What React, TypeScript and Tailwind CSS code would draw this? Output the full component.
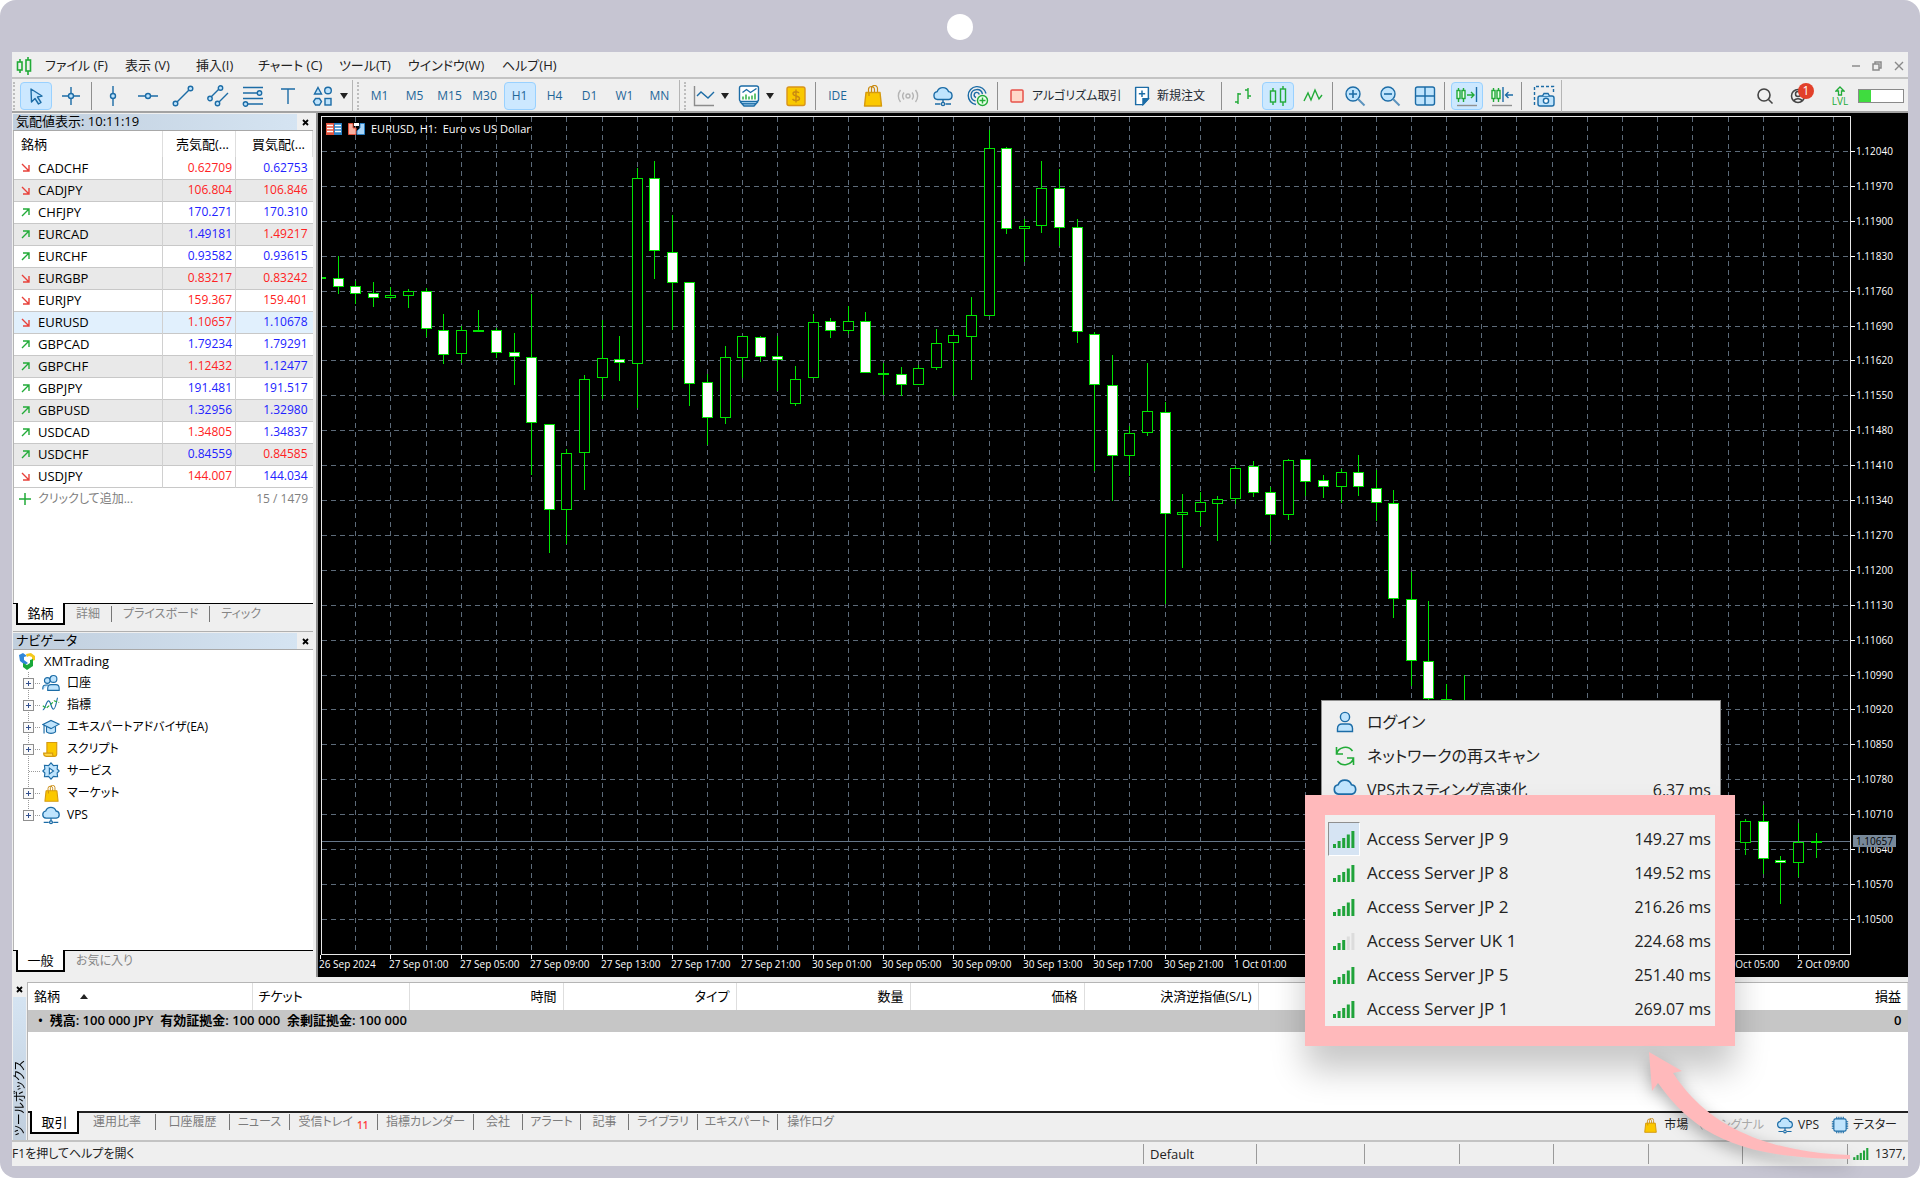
import type { ReactNode } from "react";

const BLUE = "#1c6ca6";
const SKY = "#bfe4fd";
const GREEN = "#22ab38";

function Icon({ children, size = 22 }: { children: ReactNode; size?: number }) {
  return (
    <svg
      width={size}
      height={size}
      viewBox="0 0 22 22"
      fill="none"
      stroke={BLUE}
      strokeWidth="1.4"
      className="shrink-0"
      aria-hidden="true"
    >
      {children}
    </svg>
  );
}

const CursorIcon = () => (
  <Icon>
    <path d="M6 4l11 7-4.500 1 3.500 5.500-2.500 1.500-3.500-5.500L6.500 17z" fill={SKY} strokeLinejoin="round" />
  </Icon>
);
const CrosshairIcon = () => (
  <Icon>
    <path d="M11 2v6.500M11 13.500v6.500M2 11h6.500M13.500 11H20" />
    <circle cx="11" cy="11" r="2.500" fill={SKY} />
  </Icon>
);
const VLineIcon = () => (
  <Icon>
    <path d="M11 1v7.500M11 13.500V21" />
    <circle cx="11" cy="11" r="2.500" fill={SKY} />
  </Icon>
);
const HLineIcon = () => (
  <Icon>
    <path d="M1 11h7.500M13.500 11H21" />
    <circle cx="11" cy="11" r="2.500" fill={SKY} />
  </Icon>
);
const TrendIcon = () => (
  <Icon>
    <path d="M5 17L17 5" />
    <circle cx="3.500" cy="18.500" r="2.300" fill={SKY} />
    <circle cx="18.500" cy="3.500" r="2.300" fill={SKY} />
  </Icon>
);
const ChannelIcon = () => (
  <Icon>
    <path d="M4 12l8-8M12 17l9-9" />
    <circle cx="3" cy="13.500" r="2.200" fill={SKY} />
    <circle cx="13.500" cy="3" r="2.200" fill={SKY} />
    <circle cx="10.500" cy="18.500" r="2.200" fill={SKY} />
  </Icon>
);
const FiboIcon = () => (
  <Icon>
    <path d="M1 2.500h20M1 8h14M1 13.500h20M6 19h15" />
    <circle cx="17.500" cy="8" r="2.200" fill={SKY} />
    <circle cx="3.500" cy="19" r="2.200" fill={SKY} />
  </Icon>
);
const TextIcon = () => (
  <Icon>
    <path d="M4 4h14M11 4v15" />
  </Icon>
);
const ShapesIcon = () => (
  <Icon>
    <path d="M6 2.500L9.500 9h-7zM3.500 13.500h4l2 3-2 3.500h-4l-2-3.500z" fill={SKY} />
    <circle cx="16" cy="5.500" r="3.300" fill={SKY} />
    <rect x="13" y="13.500" width="6" height="6.500" fill={SKY} />
  </Icon>
);
const IndicatorIcon = () => (
  <Icon>
    <path d="M1.500 1v19.500H21" stroke="#8c8c8c" />
    <path d="M4 11l4-4 7 6 6-6" />
  </Icon>
);
const TemplateIcon = () => (
  <Icon>
    <path d="M2 16.500l4 4.500h10l4-4.500" fill={SKY} />
    <rect x="1.500" y="1" width="19" height="15.500" rx="2" fill="#fff" />
    <path d="M4.500 7.500l4-3 4 3 6-4" />
    <path d="M5 14.500v-3M8 14.500v-5M11 14.500v-3M14 14.500v-4M17 14.500v-6" stroke={GREEN} />
    <path d="M4 18.800h14" />
  </Icon>
);
const DollarIcon = () => (
  <Icon>
    <rect x="2" y="2" width="18" height="18.500" rx="2" fill="#f9c800" stroke="#d9941a" />
    <path d="M14 8c-1-1.700-6-2-6 .8 0 2.700 6.500 1.700 6.500 4.700 0 2.700-5.500 2.700-7 .5M11 4.500v13" stroke="#c98a10" />
  </Icon>
);
const BagIcon = ({ size = 22 }: { size?: number }) => (
  <Icon size={size}>
    <path d="M6.500 8V4.500a3 3 0 0 1 6 0V8M9.500 8V3.500a3 3 0 0 1 6 0V8" stroke="#c98a10" strokeWidth="1.200" />
    <path d="M4 7.500h14l1.500 13.500h-17z" fill="#fbc800" stroke="#d59a10" strokeLinejoin="round" />
    <path d="M7 8v3" stroke="#c98a10" strokeWidth="1.200" />
  </Icon>
);
const SignalIcon = ({ size = 22 }: { size?: number }) => (
  <Icon size={size}>
    <g stroke="#b4b4b4">
      <circle cx="11" cy="11" r="2" />
      <path d="M7 7.500a5.600 5.600 0 0 0 0 7M15 7.500a5.600 5.600 0 0 1 0 7M3.500 5a9.500 9.500 0 0 0 0 12M18.500 5a9.500 9.500 0 0 1 0 12" />
    </g>
  </Icon>
);
const CLOUD = "M5.500 14.500a4 4 0 0 1-.3-7.900 6 6 0 0 1 11.300 0 4 4 0 0 1 .3 7.900z";
const CloudIcon = ({ size = 22, hosted = true }: { size?: number; hosted?: boolean }) => (
  <Icon size={size}>
    <path d={CLOUD} fill={SKY} />
    {hosted && <path d="M11 14.500v3M3 19h5.500M13.500 19H19" />}
    {hosted && <circle cx="11" cy="19" r="1.600" />}
  </Icon>
);
const RadarIcon = () => (
  <Icon>
    <path d="M9 19.500A9 9 0 1 1 19 8.500M8.500 16a5.800 5.800 0 1 1 7-7M9 12.500a2.600 2.600 0 1 1 3.300-3" />
    <circle cx="15.500" cy="15.500" r="5" fill="#eaffea" stroke={GREEN} />
    <path d="M15.500 12.500v6M12.500 15.500h6" stroke={GREEN} />
  </Icon>
);
const StopIcon = () => (
  <svg width="14" height="14" className="shrink-0" aria-hidden="true">
    <rect x="1" y="1" width="12" height="12" rx="1" fill="#ffd9c8" stroke="#e8524a" strokeWidth="1.500" />
  </svg>
);
const NewOrderIcon = () => (
  <Icon size={20}>
    <path d="M4 1.500h14V14l-6 6.500H4z" fill="#fff" strokeWidth="1.600" strokeLinejoin="round" />
    <path d="M18 14h-6v6.500z" fill={BLUE} />
    <path d="M11 5v7M7.500 8.500h7" strokeWidth="1.600" />
  </Icon>
);
const BarsIcon = () => (
  <Icon>
    <path d="M6 8v11M6 9h3M3 17h3M16 3v11M13 5h3M16 11h3" stroke={GREEN} />
  </Icon>
);
const CandlesIcon = () => (
  <Icon>
    <g stroke={GREEN}>
      <path d="M6 3v3M6 17v3M16 1v3M16 17v4" />
      <rect x="3.500" y="6" width="5" height="11" />
      <rect x="13.500" y="4" width="5" height="13" />
    </g>
  </Icon>
);
const LineIcon = () => (
  <Icon>
    <path d="M2 16l4-8 3 7 4-10 4 9 3-4" stroke={GREEN} />
  </Icon>
);
const ZoomIcon = ({ plus }: { plus?: boolean }) => (
  <Icon>
    <circle cx="9" cy="9" r="7" fill={SKY} />
    <path d="M14 14l6.500 6.500" stroke="#5c93bd" strokeWidth="2" />
    <path d={plus ? "M5 9h8M9 5v8" : "M5 9h8"} strokeWidth="1.600" />
  </Icon>
);
const TileIcon = () => (
  <Icon>
    <rect x="1.500" y="2" width="19" height="18" rx="2" fill={SKY} />
    <path d="M11 2v18M1.500 11h19" />
  </Icon>
);
const ScrollIcon = ({ reverse }: { reverse?: boolean }) => (
  <Icon>
    <g stroke={GREEN}>
      <path d="M2.500 3v14M7.500 3v14" />
      <rect x="1" y="5.500" width="3" height="8" fill="#e9ffe9" />
      <rect x="6" y="5.500" width="3" height="8" fill="#e9ffe9" />
      {!reverse && <path d="M11 10h7M15 7l3 3-3 3" />}
    </g>
    <path d={reverse ? "M12 2v15" : "M20.500 2v15"} />
    {reverse && <path d="M14.500 10H22M17.500 7l-3 3 3 3" />}
    <path d="M1 20.500h20" stroke="#909090" />
  </Icon>
);
const CameraIcon = () => (
  <Icon>
    <path d="M1.500 20V1.500h19V9" strokeDasharray="3 2" />
    <rect x="5" y="11" width="16" height="10" rx="2" fill={SKY} />
    <path d="M9.500 11l1.500-2.500h4l1.500 2.500" fill={SKY} />
    <circle cx="13" cy="15.800" r="2.600" fill="#fff" />
  </Icon>
);
const UserIcon = ({ size = 24 }: { size?: number }) => (
  <Icon size={size}>
    <circle cx="11" cy="6" r="4.600" fill={SKY} />
    <path d="M3.500 20.500v-3c0-3 2-4.500 4.500-4.500h6c2.500 0 4.500 1.500 4.500 4.500v3z" fill={SKY} />
  </Icon>
);
const RescanIcon = () => (
  <Icon size={22}>
    <g stroke={GREEN} strokeWidth="1.600">
      <path d="M2.500 9a9 9 0 0 1 16-3M2.500 2v7h6.500" />
      <path d="M19.500 13a9 9 0 0 1-16 3M19.500 20v-7H13" />
    </g>
  </Icon>
);

function SignalBars({ level = 5, className }: { level?: number; className: string }) {
  return (
    <svg viewBox="0 0 22 17" className={className} aria-hidden="true">
      {[4, 7, 10, 13.5, 17].map((h, i) => (
        <rect
          key={h}
          x={i * 4.6}
          y={17 - h}
          width="3"
          height={h}
          fill={i < level ? "#1fa33a" : "#dcdcdc"}
        />
      ))}
    </svg>
  );
}

function Menu() {
  const items = [
    ["ファイル (F)", "w-20"],
    ["表示 (V)", "w-[71px]"],
    ["挿入(I)", "w-[62px]"],
    ["チャート (C)", "w-[81px]"],
    ["ツール(T)", "w-[69px]"],
    ["ウインドウ(W)", "w-[94px]"],
    ["ヘルプ(H)", "w-20"],
  ];
  return (
    <nav className="flex h-[27px] items-center border-b-2 border-[#c3c3c3] pt-[2px] pl-1 text-[13px] text-[#222]">
      <svg width="16" height="20" viewBox="0 0 16 20" fill="none" stroke={GREEN} strokeWidth="1.600" className="mr-[13px]" aria-hidden="true">
        <path d="M4 3v3M4 14v3M12 1v3M12 15v4" />
        <rect x="1.500" y="6" width="4.500" height="8" />
        <rect x="10" y="4" width="4.500" height="11" />
      </svg>
      {items.map(([label, width]) => (
        <button key={label} className={`${width} text-left whitespace-nowrap`}>
          {label}
        </button>
      ))}
      <div className="ml-auto flex w-14 items-center justify-between pr-1 text-[#8a8a8a]">
        <button aria-label="最小化" className="h-[2px] w-2 bg-[#a5a5a5]" />
        <button aria-label="元に戻す">
          <svg width="10" height="10" fill="none" stroke="#8a8a8a" strokeWidth="1.500">
            <path d="M3 3V1h6v6H7" />
            <rect x="1" y="3" width="6" height="6" />
          </svg>
        </button>
        <button aria-label="閉じる">
          <svg width="10" height="10" stroke="#8a8a8a" strokeWidth="1.400">
            <path d="M1 1l8 8M9 1L1 9" />
          </svg>
        </button>
      </div>
    </nav>
  );
}

const Grip = () => <span className="h-7 w-0 border-l-2 border-dotted border-[#bdbdbd]" />;
const Divider = () => <span className="h-7 w-px bg-[#8f8f8f]" />;
const GroupEnd = () => <span className="h-8 w-px bg-[#b5b5b5]" />;
const Caret = () => (
  <svg width="8" height="6" className="shrink-0" aria-hidden="true">
    <path d="M0 0h8L4 6z" fill="#222" />
  </svg>
);

function Tool({ label, active, children }: { label: string; active?: boolean; children: ReactNode }) {
  return (
    <button aria-label={label} className="flex w-[35px] shrink-0 justify-center">
      <span
        className={`flex h-7 w-8 items-center justify-center rounded-sm border ${
          active ? "border-[#99d1ff] bg-[#cce8ff]" : "border-transparent"
        }`}
      >
        {children}
      </span>
    </button>
  );
}

function Toolbar() {
  return (
    <div className="flex h-[34px] items-center border-b-2 border-[#a3a3a3] pt-px text-xs text-[#1f2a33]">
      <div className="flex w-[340px] items-center pl-px">
        <Grip />
        <span className="w-[3px]" />
        <Tool label="カーソル" active><CursorIcon /></Tool>
        <Tool label="十字線"><CrosshairIcon /></Tool>
        <span className="w-[3px]" />
        <Divider />
        <span className="w-[3px]" />
        <Tool label="垂直線"><VLineIcon /></Tool>
        <Tool label="水平線"><HLineIcon /></Tool>
        <Tool label="トレンドライン"><TrendIcon /></Tool>
        <Tool label="チャネル"><ChannelIcon /></Tool>
        <Tool label="フィボナッチ"><FiboIcon /></Tool>
        <Tool label="テキスト"><TextIcon /></Tool>
        <Tool label="図形"><ShapesIcon /></Tool>
        <Caret />
      </div>
      <div className="flex w-[327px] items-center text-[#1f6698]">
        <GroupEnd />
        <span className="w-1" />
        <Grip />
        <span className="w-[3px]" />
        {["M1", "M5", "M15", "M30", "H1", "H4", "D1", "W1", "MN"].map((tf) => (
          <Tool key={tf} label={tf} active={tf === "H1"}>{tf}</Tool>
        ))}
      </div>
      <div className="flex items-center">
        <GroupEnd />
        <span className="w-1" />
        <Grip />
        <Tool label="指標"><IndicatorIcon /></Tool>
        <Caret />
        <span className="w-[2px]" />
        <Tool label="テンプレート"><TemplateIcon /></Tool>
        <Caret />
        <span className="w-1" />
        <Tool label="通貨"><DollarIcon /></Tool>
        <span className="w-[2px]" />
        <Divider />
        <span className="w-1" />
        <Tool label="IDE"><span className="text-[#1f6698]">IDE</span></Tool>
        <Tool label="マーケット"><BagIcon /></Tool>
        <Tool label="シグナル"><SignalIcon /></Tool>
        <Tool label="VPS"><CloudIcon /></Tool>
        <Tool label="コピー"><RadarIcon /></Tool>
        <span className="w-[2px]" />
        <Divider />
        <button className="flex w-[122px] items-center gap-2 pl-3 whitespace-nowrap"><StopIcon />アルゴリズム取引</button>
        <button className="flex w-[101px] items-center gap-[5px] pl-3 whitespace-nowrap"><NewOrderIcon />新規注文</button>
        <Divider />
        <span className="w-[3px]" />
        <Tool label="バーチャート"><BarsIcon /></Tool>
        <Tool label="ローソク足" active><CandlesIcon /></Tool>
        <Tool label="ラインチャート"><LineIcon /></Tool>
        <span className="w-[2px]" />
        <Divider />
        <span className="w-1" />
        <Tool label="ズームイン"><ZoomIcon plus /></Tool>
        <Tool label="ズームアウト"><ZoomIcon /></Tool>
        <Tool label="並べて表示"><TileIcon /></Tool>
        <span className="w-[2px]" />
        <Divider />
        <span className="w-1" />
        <Tool label="自動スクロール" active><ScrollIcon /></Tool>
        <Tool label="チャートシフト"><ScrollIcon reverse /></Tool>
        <span className="w-[2px]" />
        <Divider />
        <span className="w-1" />
        <Tool label="スクリーンショット"><CameraIcon /></Tool>
        <GroupEnd />
      </div>
      <div className="ml-auto flex items-center pr-1">
        <Tool label="検索">
          <svg width="18" height="18" fill="none" stroke="#444" strokeWidth="1.600">
            <circle cx="8" cy="8" r="6" />
            <path d="M12.500 12.500l4 4" />
          </svg>
        </Tool>
        <button aria-label="通知" className="relative mx-1 flex w-9 justify-start pl-1">
          <svg width="18" height="18" fill="none" stroke="#444" strokeWidth="1.500">
            <circle cx="8" cy="9" r="6.500" />
            <circle cx="8" cy="7" r="2.500" />
            <path d="M4 14c1-3 7-3 8 0" />
          </svg>
          <span className="absolute -top-1 left-3 size-4 rounded-full bg-[#e2402a] text-center text-xs leading-4 text-white">1</span>
        </button>
        <div className="flex w-7 flex-col items-center text-[10px] leading-[10px] text-[#22ab38]">
          <svg width="10" height="10" fill="none" stroke={GREEN} strokeWidth="1.300">
            <path d="M5 1l4 4H6.500v4h-3V5H1z" />
          </svg>
          LVL
        </div>
        <div className="ml-1 h-[14px] w-[46px] border border-[#8a8a8a] bg-white">
          <div className="h-full w-3 bg-[#3fdc3f]" />
        </div>
      </div>
    </div>
  );
}

type Quote = [symbol: string, up: boolean, bid: string, bidUp: boolean, ask: string, askUp: boolean];

const quotes: Quote[] = [
  ["CADCHF", false, "0.62709", false, "0.62753", true],
  ["CADJPY", false, "106.804", false, "106.846", false],
  ["CHFJPY", true, "170.271", true, "170.310", true],
  ["EURCAD", true, "1.49181", true, "1.49217", false],
  ["EURCHF", true, "0.93582", true, "0.93615", true],
  ["EURGBP", false, "0.83217", false, "0.83242", false],
  ["EURJPY", false, "159.367", false, "159.401", false],
  ["EURUSD", false, "1.10657", false, "1.10678", true],
  ["GBPCAD", true, "1.79234", true, "1.79291", true],
  ["GBPCHF", true, "1.12432", false, "1.12477", true],
  ["GBPJPY", true, "191.481", true, "191.517", true],
  ["GBPUSD", true, "1.32956", true, "1.32980", true],
  ["USDCAD", true, "1.34805", false, "1.34837", true],
  ["USDCHF", true, "0.84559", true, "0.84585", false],
  ["USDJPY", false, "144.007", false, "144.034", true],
];

function DirectionArrow({ up }: { up: boolean }) {
  return (
    <svg width="9" height="9" fill="none" stroke={up ? GREEN : "#e8413a"} strokeWidth="1.400" aria-hidden="true">
      <path d={up ? "M1 8l7-7M2 1h6v6" : "M1 1l7 7M2 8h6V2"} />
    </svg>
  );
}

function PanelTitle({ title }: { title: string }) {
  return (
    <div className="flex h-[17px] items-center border-b border-[#a8a8a8] bg-[#efefef] text-[13px] leading-[14px]">
      <span className="h-4 flex-1 bg-linear-to-r from-[#c0cedd] to-[#d5e4f2] pl-[3px]">{title}</span>
      <button aria-label="閉じる" className="flex w-4 justify-center">
        <svg width="7" height="7" stroke="#000" strokeWidth="1.800">
          <path d="M1 1l5 5M6 1L1 6" />
        </svg>
      </button>
    </div>
  );
}

function PanelTabs({ tabs }: { tabs: string[] }) {
  return (
    <div className="flex h-6 border-t border-black bg-[#efefef] text-[13px] text-[#858585]">
      {tabs.map((tab, i) =>
        i === 0 ? (
          <button key={tab} className="-mt-px ml-[3px] h-[22px] w-[49px] border-r-2 border-b-2 border-l-2 border-black bg-white leading-5 text-black">
            {tab}
          </button>
        ) : (
          <span key={tab} className="flex h-5 items-center text-xs">
            {i > 1 && <span className="h-4 w-px bg-[#777]" />}
            <button className="px-[11px] leading-5">{tab}</button>
          </span>
        ),
      )}
    </div>
  );
}

function MarketWatch() {
  return (
    <section className="flex h-[514px] flex-col pt-px">
      <PanelTitle title="気配値表示: 10:11:19" />
      <div className="flex-1 border-l border-[#b5b5b5] bg-white">
        <table className="w-full table-fixed border-collapse text-[13px] leading-[18px]">
          <colgroup>
            <col />
            <col className="w-[73px]" />
            <col className="w-[77px]" />
          </colgroup>
          <thead>
            <tr className="h-[26px]">
              <th className="border-r border-[#dedede] p-0 pl-[7px] text-left font-normal">銘柄</th>
              <th className="border-r border-[#dedede] p-0 pr-[6px] text-right font-normal whitespace-nowrap">売気配(...</th>
              <th className="border-r border-[#dedede] p-0 pr-[7px] text-right font-normal whitespace-nowrap">買気配(...</th>
            </tr>
          </thead>
          <tbody>
            {quotes.map(([symbol, up, bid, bidUp, ask, askUp], i) => (
              <tr
                key={symbol}
                className={`h-[22px] border-b border-[#c8c8c8] ${
                  symbol === "EURUSD" ? "bg-[#e1f0fd]" : i % 2 ? "bg-[#e9e9e9]" : "bg-white"
                }`}
              >
                <td className="border-r border-[#d0d0d0] p-0 pl-[7px]">
                  <span className="flex items-center gap-2">
                    <DirectionArrow up={up} />
                    {symbol}
                  </span>
                </td>
                <td className={`border-r border-[#d0d0d0] p-0 pr-[3px] text-right text-xs ${bidUp ? "text-[#2222ff]" : "text-[#ff2222]"}`}>{bid}</td>
                <td className={`p-0 pr-[5px] text-right text-xs ${askUp ? "text-[#2222ff]" : "text-[#ff2222]"}`}>{ask}</td>
              </tr>
            ))}
          </tbody>
        </table>
        <div className="flex h-[22px] items-center pr-[5px] pl-[5px] text-[#808080]">
          <svg width="12" height="12" stroke={GREEN} strokeWidth="1.500" aria-hidden="true">
            <path d="M6 0v12M0 6h12" />
          </svg>
          <button className="ml-[7px] text-xs">クリックして追加...</button>
          <span className="ml-auto text-xs">15 / 1479</span>
        </div>
      </div>
      <PanelTabs tabs={["銘柄", "詳細", "プライスボード", "ティック"]} />
    </section>
  );
}

const treeItems: { label: string; leaf?: boolean; icon: ReactNode }[] = [
  {
    label: "口座",
    icon: (
      <Icon size={18}>
        <circle cx="6.500" cy="8" r="3.500" fill={SKY} />
        <path d="M1 19v-2c0-2 1.500-3.500 4-3.500h3" fill={SKY} />
        <circle cx="14" cy="6" r="4.200" fill={SKY} />
        <path d="M7 20v-2.500c0-2.500 1.500-4.500 4-4.500h6c2.500 0 4 2 4 4.500V20z" fill={SKY} />
      </Icon>
    ),
  },
  {
    label: "指標",
    icon: (
      <Icon size={18}>
        <path d="M1 17c3 0 4-11 7-11s3 10 6 10 4-12 5-14" />
        <path d="M1 12l4 3 6-5 4-4 6 2" stroke={GREEN} strokeDasharray="4 2" />
      </Icon>
    ),
  },
  {
    label: "エキスパートアドバイザ(EA)",
    icon: (
      <Icon size={18}>
        <path d="M5.500 10v7c3 2.500 8 2.500 11 0v-7" fill={SKY} />
        <path d="M1 8l10-5 10 4.500-10 5.500zM2.500 9v10" fill={SKY} />
      </Icon>
    ),
  },
  {
    label: "スクリプト",
    icon: (
      <Icon size={18}>
        <path d="M6 3h12v14c0 2-1 3-3 3H6z" fill="#fbc800" stroke="#d59a10" />
        <path d="M2 16h11v2c0 1 1 2 2 2H5c-2 0-3-2-3-4z" fill="#ffd94a" stroke="#d59a10" />
      </Icon>
    ),
  },
  {
    label: "サービス",
    leaf: true,
    icon: (
      <Icon size={18}>
        <path d="M11 1l3 3.500 5-.5-.5 4.500L21 11l-2.500 2.500L19 18l-5-.500L11 21l-3-3.500-5 .5.500-4.500L1 11l2.500-2.500L3 4l5 .5z" fill={SKY} />
        <path d="M9 7.500v7l5-3.500z" fill="#fff" />
      </Icon>
    ),
  },
  { label: "マーケット", icon: <BagIcon size={17} /> },
  { label: "VPS", icon: <CloudIcon size={20} /> },
];

function Navigator() {
  return (
    <section className="flex flex-1 flex-col border-t border-[#b0b0b0] pt-px">
      <PanelTitle title="ナビゲータ" />
      <div className="flex-1 border-l border-[#b5b5b5] bg-white text-[13px] leading-[22px]">
        <div className="flex h-[22px] items-center gap-2 pl-1">
          <svg width="18" height="18" viewBox="0 0 18 18" aria-hidden="true">
            <path d="M1 3l4-2 4 3-3 1v3l4 3-3 2-5-4z" fill="#2f86d8" />
            <path d="M8 2l5-1 4 3v4l-3 1V5l-3-1-2 1z" fill="#f4c81c" />
            <path d="M5 11l4 2 3-2V8l3-1v7l-6 4-4-3z" fill="#19a83a" />
          </svg>
          XMTrading
        </div>
        <ul>
          {treeItems.map(({ label, leaf, icon }, i) => (
            <li key={label} className="flex h-[22px] items-center pl-2">
              <svg width="18" height="22" fill="none" stroke="#9a9a9a" aria-hidden="true">
                <path d={i === treeItems.length - 1 ? "M6.500 0v11" : "M6.500 0v22"} strokeDasharray="1 1" />
                <path d="M7 11.500h11" strokeDasharray="1 1" />
                {!leaf && <rect x="1.500" y="6.500" width="10" height="10" fill="#fafafa" stroke="#8f8f8f" />}
                {!leaf && <path d="M4 11.500h5M6.500 9v5" stroke="#33508f" />}
              </svg>
              <span className="flex w-[22px] justify-center">{icon}</span>
              <span className="ml-[5px] text-xs leading-[22px]">{label}</span>
            </li>
          ))}
        </ul>
      </div>
      <PanelTabs tabs={["一般", "お気に入り"]} />
      <div className="h-[3px]" />
    </section>
  );
}

// high, body top, body bottom, low (three units per pixel), 1 = bearish
type Candle = [slot: number, high: number, top: number, bottom: number, low: number, bear: 0 | 1];

const candles: Candle[] = [
  [0, 500, 500, 506, 506, 0], [1, 437, 504, 532, 552, 1], [2, 514, 527, 551, 581, 1],
  [3, 516, 549, 565, 591, 1], [4, 530, 556, 565, 568, 0], [5, 538, 544, 558, 595, 0],
  [6, 534, 544, 657, 680, 1], [7, 612, 659, 734, 763, 1], [8, 648, 661, 733, 758, 0],
  [9, 599, 661, 664, 667, 0], [10, 655, 661, 730, 743, 1], [11, 668, 727, 740, 824, 1],
  [12, 553, 742, 938, 1095, 1], [13, 942, 942, 1201, 1328, 1], [14, 1018, 1028, 1201, 1301, 0],
  [15, 796, 808, 1029, 1139, 0], [16, 631, 745, 805, 866, 0], [17, 678, 748, 759, 812, 1],
  [18, 174, 204, 763, 895, 0], [19, 153, 204, 422, 507, 1], [20, 315, 425, 518, 661, 1],
  [21, 517, 517, 822, 888, 1], [22, 792, 817, 923, 1004, 1], [23, 708, 742, 924, 942, 0],
  [24, 679, 679, 743, 803, 0], [25, 677, 682, 740, 756, 1], [26, 677, 738, 749, 842, 1],
  [27, 767, 808, 881, 888, 0], [28, 612, 636, 805, 805, 0], [29, 625, 632, 664, 684, 1],
  [30, 589, 632, 664, 672, 0], [31, 605, 632, 789, 789, 1], [32, 759, 789, 791, 856, 0],
  [33, 771, 791, 825, 858, 1], [34, 764, 775, 826, 826, 0], [35, 658, 699, 773, 779, 0],
  [36, 660, 676, 700, 858, 0], [37, 562, 616, 680, 810, 0], [38, 61, 115, 618, 618, 0],
  [39, 112, 115, 356, 371, 1], [40, 327, 349, 356, 455, 0], [41, 153, 234, 347, 368, 0],
  [42, 177, 234, 353, 407, 1], [43, 327, 352, 667, 698, 1], [44, 666, 673, 825, 1083, 1],
  [45, 734, 824, 1037, 1172, 1], [46, 949, 969, 1037, 1099, 0], [47, 759, 904, 970, 977, 0],
  [48, 876, 907, 1211, 1481, 1], [49, 1153, 1207, 1214, 1374, 0], [50, 1146, 1177, 1205, 1247, 0],
  [51, 1159, 1168, 1181, 1292, 0], [52, 1068, 1075, 1166, 1182, 0], [53, 1053, 1068, 1148, 1162, 1],
  [54, 1131, 1147, 1214, 1294, 1], [55, 1047, 1051, 1214, 1229, 0], [56, 1046, 1048, 1115, 1159, 1],
  [57, 1096, 1111, 1130, 1165, 1], [58, 1076, 1087, 1132, 1178, 0], [59, 1034, 1085, 1132, 1157, 1],
  [60, 1081, 1134, 1178, 1234, 1], [61, 1139, 1180, 1468, 1525, 1], [62, 1387, 1468, 1652, 1727, 1],
  [63, 1473, 1652, 1768, 1790, 1], [64, 1722, 1767, 1800, 1830, 1], [65, 1695, 1790, 1830, 1860, 0],
  [81, 2126, 2134, 2198, 2235, 0], [82, 2085, 2134, 2246, 2291, 1], [83, 2238, 2249, 2259, 2382, 1],
  [84, 2138, 2195, 2259, 2301, 0], [85, 2169, 2194, 2196, 2244, 0],
];

const timeLabels: [slot: number, label: string][] = [
  [0, "26 Sep 2024"], [4, "27 Sep 01:00"], [8, "27 Sep 05:00"], [12, "27 Sep 09:00"],
  [16, "27 Sep 13:00"], [20, "27 Sep 17:00"], [24, "27 Sep 21:00"], [28, "30 Sep 01:00"],
  [32, "30 Sep 05:00"], [36, "30 Sep 09:00"], [40, "30 Sep 13:00"], [44, "30 Sep 17:00"],
  [48, "30 Sep 21:00"], [52, "1 Oct 01:00"], [80, "2 Oct 05:00"], [84, "2 Oct 09:00"],
];

const SLOT = 17.595;
const ROW = 34.9;
const prices = Array.from({ length: 23 }, (_, i) => (1.1204 - i * 0.0007).toFixed(5));
const slotX = (i: number) => Math.round(i * SLOT) - 2;
const candleY = (v: number) => Math.round(v / 3) - 7;
const rowY = (i: number) => Math.round(34 + i * ROW);

function Plot() {
  return (
    <svg className="absolute inset-0 size-full" shapeRendering="crispEdges" aria-label="EURUSD H1">
      <g stroke="#5d6b7a" strokeDasharray="5 4">
        {Array.from({ length: 43 }, (_, i) => (
          <line key={i} x1={slotX(i * 2 + 2) + 0.5} x2={slotX(i * 2 + 2) + 0.5} y1="0" y2="100%" />
        ))}
        {prices.map((p, i) => (
          <line key={p} x1="0" x2="100%" y1={rowY(i) + 0.5} y2={rowY(i) + 0.5} />
        ))}
      </g>
      <line x1="0" x2="100%" y1="724.5" y2="724.5" stroke="#66778a" />
      <g stroke="#00e400">
        {candles.map(([slot, high, top, bottom, low, bear]) => (
          <g key={slot}>
            <line x1={slotX(slot) + 0.5} x2={slotX(slot) + 0.5} y1={candleY(high)} y2={candleY(low)} />
            <rect
              x={slotX(slot) - 4.5}
              y={candleY(top) + 0.5}
              width="10"
              height={Math.max(candleY(bottom) - candleY(top) - 1, 0.5)}
              fill={bear ? "#fff" : "#000"}
            />
          </g>
        ))}
      </g>
    </svg>
  );
}

function Chart() {
  return (
    <section className="flex flex-1 flex-col bg-black pt-[3px] pl-[3px] text-[10px] text-white">
      <div className="flex flex-1">
        <div className="relative flex-1 overflow-hidden border border-[#e8e8e8]">
          <Plot />
          <h1 className="absolute top-1 left-1 flex items-center gap-[6px] text-[11px] leading-4">
            <svg width="16" height="12" aria-hidden="true">
              <rect width="8" height="12" fill="#e2533d" />
              <rect x="8" width="8" height="12" fill="#2a7fc4" />
              <path d="M1 2.500h6M1 5.500h6M1 8.500h6M9 2.500h6M9 5.500h6M9 8.500h6" stroke="#fff" strokeWidth="1.500" />
            </svg>
            <svg width="17" height="12" aria-hidden="true">
              <path d="M.5.5H5V5h3v6.500H.5z" fill="#f7b0a2" stroke="#e2533d" />
              <path d="M16.500.5H12V5L9 8v3.500h7.500z" fill="#a8d4f7" stroke="#2a7fc4" />
              <path d="M6 0h5v3H6z" fill="#fff" />
            </svg>
            <span className="whitespace-pre">EURUSD, H1:  Euro vs US Dollar</span>
          </h1>
        </div>
        <div className="relative flex w-[57px] flex-col">
          {prices.map((p, i) => (
            <span
              key={p}
              className="absolute left-0 flex h-3 items-center gap-px leading-3"
              style={{ top: rowY(i) - 5 }}
            >
              <span className="h-px w-1 bg-white" />
              {p}
            </span>
          ))}
          <span className="absolute top-[719px] left-[2px] h-3 bg-[#778899] px-[3px] leading-3 text-black">1.10657</span>
        </div>
      </div>
      <svg className="h-[22px] w-full overflow-visible" fill="#fff" aria-label="時間軸">
        {timeLabels.map(([slot, label]) => (
          <g key={label}>
            <rect x={slotX(slot) + 1} y="0" width="1" height="4" />
            <text x={slotX(slot)} y="13">{label}</text>
          </g>
        ))}
      </svg>
    </section>
  );
}

const toolboxTabs = [
  ["運用比率", "w-[76px]"],
  ["口座履歴", "w-[74px]"],
  ["ニュース", "w-[60px]"],
  ["受信トレイ", "w-[88px]"],
  ["指標カレンダー", "w-[96px]"],
  ["会社", "w-[49px]"],
  ["アラート", "w-[58px]"],
  ["記事", "w-12"],
  ["ライブラリ", "w-[69px]"],
  ["エキスパート", "w-20"],
  ["操作ログ", "w-[66px]"],
];

function Toolbox() {
  return (
    <section className="flex h-[165px] border-b-2 border-[#c3c3c3] pt-[5px] text-[13px]">
      <div className="flex w-[15px] flex-col items-center">
        <button aria-label="閉じる" className="flex h-[15px] items-center">
          <svg width="7" height="7" stroke="#000" strokeWidth="1.800">
            <path d="M1 1l5 5M6 1L1 6" />
          </svg>
        </button>
        <div className="flex w-[13px] flex-1 items-center bg-linear-to-b from-[#d5e4f2] to-[#c0cedd]">
          <span className="mt-auto rotate-180 pt-1 text-xs leading-[13px] whitespace-nowrap [text-orientation:sideways] [writing-mode:vertical-rl]">
            ツールボックス
          </span>
        </div>
      </div>
      <div className="flex flex-1 flex-col border-t border-l border-[#b5b5b5]">
        <div className="flex-1 bg-white">
          <table className="w-full table-fixed border-collapse">
            <thead>
              <tr className="h-[27px] text-right [&>th]:border-r [&>th]:border-[#dedede] [&>th]:p-0 [&>th]:px-[6px] [&>th]:font-normal">
                <th className="w-[224px] text-left">
                  <span className="flex items-center gap-5">
                    銘柄
                    <svg width="8" height="5" aria-hidden="true"><path d="M0 5h8L4 0z" fill="#222" /></svg>
                  </span>
                </th>
                <th className="w-[157px] text-left">チケット</th>
                <th className="w-[154px]">時間</th>
                <th className="w-[173px]">タイプ</th>
                <th className="w-[174px]">数量</th>
                <th className="w-[174px]">価格</th>
                <th className="w-[174px]">決済逆指値(S/L)</th>
                <th>損益</th>
              </tr>
            </thead>
            <tbody>
              <tr className="h-[22px] bg-[#c6c6c6] font-semibold">
                <td colSpan={7} className="p-0 pl-[10px] whitespace-pre">•  残高: 100 000 JPY  有効証拠金: 100 000  余剰証拠金: 100 000</td>
                <td className="p-0 pr-[6px] text-right">0</td>
              </tr>
            </tbody>
          </table>
        </div>
        <div className="flex h-[29px] border-t-2 border-[#222] bg-[#efefef] text-[#7c7c7c]">
          <button className="-mt-[2px] ml-[2px] h-[23px] w-[49px] border-r-2 border-b-2 border-l-2 border-black bg-white leading-5 text-black">取引</button>
          <div className="flex h-[18px] items-center text-xs">
            {toolboxTabs.map(([label, width], i) => (
              <button key={label} className={`${width} ${i ? "border-l border-[#777]" : ""} h-4 text-center leading-4 whitespace-nowrap`}>
                {label}
                {label === "受信トレイ" && <sub className="ml-1 text-[10px] font-semibold text-[#ff3b3b]">11</sub>}
              </button>
            ))}
          </div>
          <div className="ml-auto flex h-6 items-center gap-3 pr-[11px] text-xs text-[#222]">
            <button className="flex items-center gap-[6px]"><BagIcon size={15} />市場</button>
            <button className="flex items-center gap-1 text-[#aaa]"><SignalIcon size={15} />シグナル</button>
            <button className="flex items-center gap-1"><CloudIcon size={18} />VPS</button>
            <button className="flex items-center gap-1">
              <Icon size={18}>
                <path d="M7 1v20M9.600 1v20M12.300 1v20M15 1v20M1 7h20M1 9.600h20M1 12.300h20M1 15h20" />
                <rect x="3.500" y="3.500" width="15" height="15" rx="2" fill={SKY} />
              </Icon>
              テスター
            </button>
          </div>
        </div>
      </div>
    </section>
  );
}

function StatusBar() {
  return (
    <footer className="flex h-6 items-center text-xs text-[#222]">
      <span className="flex-1">F1を押してヘルプを開く</span>
      <span className="h-5 w-[113px] border-l border-[#9a9a9a] pl-[6px] text-[13px] leading-5">Default</span>
      <span className="h-5 w-[108px] border-l border-[#9a9a9a]" />
      <span className="h-5 w-[95px] border-l border-[#9a9a9a]" />
      <span className="h-5 w-[94px] border-l border-[#9a9a9a]" />
      <span className="h-5 w-[95px] border-l border-[#9a9a9a]" />
      <span className="h-5 w-[94px] border-l border-[#9a9a9a]" />
      <span className="h-5 w-[105px] border-l border-[#9a9a9a]" />
      <span className="flex h-5 w-[61px] items-center gap-[6px] border-l border-[#9a9a9a] pl-[5px]">
        <SignalBars className="h-3 w-4 shrink-0" />
        1377,
      </span>
    </footer>
  );
}

const servers = [
  { name: "Access Server JP 9", ping: "149.27 ms", level: 5, current: true },
  { name: "Access Server JP 8", ping: "149.52 ms", level: 5 },
  { name: "Access Server JP 2", ping: "216.26 ms", level: 5 },
  { name: "Access Server UK 1", ping: "224.68 ms", level: 3 },
  { name: "Access Server JP 5", ping: "251.40 ms", level: 5 },
  { name: "Access Server JP 1", ping: "269.07 ms", level: 5 },
];

function ServerMenu() {
  return (
    <div className="absolute right-[173px] bottom-[120px] w-[430px] text-base text-[#222]">
      <div className="mr-[14px] ml-4 h-[95px] overflow-hidden border border-b-0 border-[#8f8f8f] bg-[#efefef] pt-1">
        <button className="flex h-[34px] w-full items-center"><span className="flex w-[45px] justify-center"><UserIcon size={22} /></span>ログイン</button>
        <button className="flex h-[34px] w-full items-center"><span className="flex w-[45px] justify-center"><RescanIcon /></span>ネットワークの再スキャン</button>
        <button className="flex h-[34px] w-full items-center pr-[9px]">
          <span className="flex w-[45px] justify-center"><CloudIcon size={26} hosted={false} /></span>
          VPSホスティング高速化
          <span className="ml-auto">6.37 ms</span>
        </button>
      </div>
      <div className="h-[251px] border-[20px] border-[#ffb9bb] bg-[#efefef] pt-[7px] shadow-[0_24px_32px_rgba(0,0,0,0.22)]">
        {servers.map(({ name, ping, level, current }) => (
          <button key={name} className="flex h-[34px] w-full items-center pr-1 pl-[3px]">
            <span
              className={`mr-[7px] flex h-[34px] w-8 items-center justify-center border ${
                current ? "border-t-[#8f8f8f] border-r-white border-b-white border-l-[#8f8f8f] bg-[#d6e4f3]" : "border-transparent"
              }`}
            >
              <SignalBars level={level} className="h-[17px] w-[22px]" />
            </span>
            <span className="text-[17px]">{name}</span>
            <span className="ml-auto">{ping}</span>
          </button>
        ))}
      </div>
    </div>
  );
}

function Pointer() {
  return (
    <svg width="215" height="120" className="pointer-events-none absolute right-[53px] bottom-px drop-shadow-[0_6px_8px_rgba(0,0,0,0.3)]" aria-hidden="true">
      <path d="M9 7L42 26 33 28C52 56 92 106 210 110L210 114C100 114 55 90 18 38L12 46z" fill="#ffb9bb" />
    </svg>
  );
}

export default function App() {
  return (
    <div className="bg-white font-['Open_Sans','Noto_Sans_CJK_JP',sans-serif] [font-feature-settings:'palt']">
      <div className="relative flex min-h-screen flex-col rounded-2xl bg-[#c6c5d2] px-3 pt-[52px] pb-3">
        <div className="absolute top-[14px] left-1/2 size-[26px] -translate-x-1/2 rounded-full bg-white" />
        <main className="relative flex flex-1 flex-col bg-[#efefef] text-black">
          <Menu />
          <Toolbar />
          <div className="flex flex-1">
            <aside className="flex w-[306px] flex-col border-r-2 border-[#8f8f8f] pr-[3px] pl-px">
              <MarketWatch />
              <div className="h-1" />
              <Navigator />
            </aside>
            <Chart />
          </div>
          <Toolbox />
          <StatusBar />
          <ServerMenu />
          <Pointer />
        </main>
      </div>
    </div>
  );
}
